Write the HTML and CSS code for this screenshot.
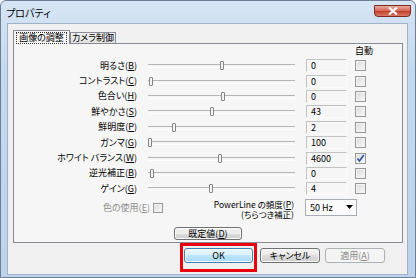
FILE: index.html
```html
<!DOCTYPE html>
<html lang="ja">
<head>
<meta charset="utf-8">
<title>プロパティ</title>
<link rel="stylesheet" href="styles.css">
</head>
<body>
<div class="window">
  <div class="titlebar">
    <span class="title">プロパティ</span>
    <span class="close"><svg width="10" height="8" viewBox="0 0 10 8"><path d="M1 0.5 L9 7.5 M9 0.5 L1 7.5" stroke="#fff" stroke-width="2.2" fill="none"/></svg></span>
  </div>
  <div class="client">
    <div class="tabs">
      <div class="tab active"><span class="focus">画像の調整</span></div>
      <div class="tab">カメラ制御</div>
    </div>
    <div class="panel">
      <div class="head"><span>自動</span></div>
      <div class="row"><span class="lbl">明るさ(<u>B</u>)</span><div class="slider"><span class="thumb" style="left:72px"></span></div><div class="val">0</div><span class="chk"></span></div>
      <div class="row"><span class="lbl">コントラスト(<u>C</u>)</span><div class="slider"><span class="thumb" style="left:1px"></span></div><div class="val">0</div><span class="chk"></span></div>
      <div class="row"><span class="lbl">色合い(<u>H</u>)</span><div class="slider"><span class="thumb" style="left:73px"></span></div><div class="val">0</div><span class="chk"></span></div>
      <div class="row"><span class="lbl">鮮やかさ(<u>S</u>)</span><div class="slider"><span class="thumb" style="left:62px"></span></div><div class="val">43</div><span class="chk"></span></div>
      <div class="row"><span class="lbl">鮮明度(<u>P</u>)</span><div class="slider"><span class="thumb" style="left:24px"></span></div><div class="val">2</div><span class="chk"></span></div>
      <div class="row"><span class="lbl">ガンマ(<u>G</u>)</span><div class="slider"><span class="thumb" style="left:0px"></span></div><div class="val">100</div><span class="chk"></span></div>
      <div class="row"><span class="lbl">ホワイト バランス(<u>W</u>)</span><div class="slider"><span class="thumb" style="left:70px"></span></div><div class="val">4600</div><span class="chk checked"><svg width="9" height="9" viewBox="0 0 9 9"><path d="M1.5 4.5 L3.5 7 L7.8 1" stroke="#2b4f9e" stroke-width="1.6" fill="none"/></svg></span></div>
      <div class="row"><span class="lbl">逆光補正(<u>B</u>)</span><div class="slider"><span class="thumb" style="left:2px"></span></div><div class="val">0</div><span class="chk"></span></div>
      <div class="row"><span class="lbl">ゲイン(<u>G</u>)</span><div class="slider"><span class="thumb" style="left:61px"></span></div><div class="val">4</div><span class="chk"></span></div>
      <div class="extra">
        <div class="use"><span class="dis">色の使用(<u>E</u>)</span><span class="chk small"></span></div>
        <div class="pl"><span class="pl1">PowerLine の頻度(<u>P</u>)</span><span class="pl2">(ちらつき補正)</span></div>
        <div class="select"><span>50 Hz</span><svg width="7" height="4" viewBox="0 0 7 4"><path d="M0 0 H7 L3.5 4 Z" fill="#000"/></svg></div>
      </div>
      <div class="defrow"><button class="btn def">既定値(<u>D</u>)</button></div>
    </div>
    <div class="buttons">
      <span class="hl"><button class="btn ok">OK</button></span>
      <button class="btn cancel">キャンセル</button>
      <button class="btn apply" disabled>適用(<u>A</u>)</button>
    </div>
  </div>
</div>
</body>
</html>
```
FILE: styles.css
```css
* { box-sizing: border-box; margin: 0; padding: 0; }
html, body { width: 416px; height: 278px; overflow: hidden; }
body {
  font-family: "Noto Sans CJK JP", "Noto Sans", sans-serif;
  font-size: 9px;
  color: #000;
  font-feature-settings: "palt";
  background: #fff;
}
u { text-decoration: underline; text-underline-offset: 1px; }

.window {
  width: 416px;
  height: 278px;
  background: linear-gradient(180deg, #d6e5f4 0, #c5d9ee 25%, #bdd3eb 100%);
  border: 1px solid #6c7f95;
  border-radius: 6px 6px 0 0;
  display: flex;
  flex-direction: column;
}

.titlebar {
  height: 22px;
  display: flex;
  align-items: flex-start;
  padding-left: 5px;
}
.title {
  font-size: 10px;
  line-height: 12px;
  margin-top: 6px;
  color: #000;
}
.close {
  margin-left: auto;
  margin-right: 4px;
  margin-top: 4px;
  width: 37px;
  height: 12px;
  border: 1px solid #7c2d25;
  border-radius: 0 0 4px 4px;
  background: linear-gradient(180deg, #e9a99c 0, #d76a5a 45%, #c4402f 55%, #d97a68 100%);
  display: flex;
  align-items: center;
  justify-content: center;
}

.client {
  margin-left: 6px;
  width: 401px;
  height: 252px;
  background: #f0f0f0;
  border: 1px solid #9fb2c8;
  display: flex;
  flex-direction: column;
}

.tabs {
  height: 19px;
  padding-left: 5px;
  display: flex;
  align-items: flex-end;
}
.tab {
  border: 1px solid #898c95;
  border-bottom: none;
  font-size: 9px;
  line-height: 10px;
  white-space: nowrap;
  display: flex;
  align-items: center;
  justify-content: center;
  height: 11px;
  width: 46px;
  background: linear-gradient(180deg, #f3f3f3, #e2e2e2);
}
.tab.active {
  width: 57px;
  height: 14px;
  margin-bottom: -1px;
  position: relative;
  z-index: 1;
  background: #f6f6f6;
}
.focus {
  outline: 1px dotted #333;
  outline-offset: 0;
  padding: 0 2px;
  line-height: 10px;
}

.panel {
  margin: 0 4px 0 5px;
  height: 200px;
  border: 1px solid #898c95;
  background: #f6f6f6;
  display: flex;
  flex-direction: column;
  overflow: hidden;
}
.head {
  height: 14px;
  line-height: 14px;
  padding-left: 341px;
}
.row {
  height: 15.4px;
  display: flex;
  align-items: center;
}
.lbl {
  width: 123px;
  text-align: right;
  white-space: nowrap;
  line-height: 12px;
}
.slider {
  width: 147px;
  height: 9px;
  margin-left: 11px;
  position: relative;
}
.slider::before {
  content: "";
  position: absolute;
  left: 0;
  right: 0;
  top: 3px;
  height: 2px;
  border-top: 1px solid #b4b4b4;
  border-bottom: 1px solid #fdfdfd;
}
.thumb {
  position: absolute;
  top: 0;
  width: 4px;
  height: 9px;
  border: 1px solid #858585;
  border-radius: 1px;
  background: #f4f4f4;
}
.val {
  width: 41px;
  height: 13px;
  margin-left: 11px;
  border: 1px solid;
  border-color: #c2c2c2 #fbfbfb #fbfbfb #c2c2c2;
  padding-left: 4px;
  line-height: 11px;
  font-size: 9px;
}
.chk {
  width: 11px;
  height: 11px;
  margin-left: 8px;
  border: 1px solid #979797;
  background: linear-gradient(135deg, #d9d9d9, #f9f9f9);
  box-shadow: inset 0 0 0 1px #f3f3f3;
  display: flex;
  align-items: center;
  justify-content: center;
}
.chk.small { width: 10px; height: 10px; margin-left: 3px; }

.extra {
  height: 23px;
  display: flex;
  align-items: flex-start;
}
.use {
  width: 149px;
  height: 23px;
  display: flex;
  justify-content: flex-end;
  align-items: center;
}
.dis { color: #8d8d8d; line-height: 12px; }
.pl {
  width: 131px;
  padding-top: 2px;
  display: flex;
  flex-direction: column;
  align-items: flex-end;
  white-space: nowrap;
}
.pl1 { font-size: 8.5px; line-height: 10px; }
.pl2 { font-size: 8.5px; line-height: 10px; }
.select {
  margin-left: 11px;
  margin-top: 2px;
  width: 52px;
  height: 17px;
  border: 1px solid #a9aeb5;
  background: #fbfbfb;
  display: flex;
  align-items: center;
  justify-content: space-between;
  padding: 0 3px 0 4px;
}

.defrow {
  margin-top: 7px;
  display: flex;
  justify-content: center;
}

.btn {
  font-family: inherit;
  font-size: 9px;
  font-feature-settings: "palt";
  color: #000;
  height: 15px;
  border: 1px solid #707070;
  border-radius: 3px;
  background: linear-gradient(180deg, #f2f2f2 0, #ebebeb 50%, #dddddd 50%, #cfcfcf 100%);
  box-shadow: inset 0 0 0 1px #fbfbfb;
  display: flex;
  align-items: center;
  justify-content: center;
  line-height: 11px;
}
.btn.def { width: 68px; height: 13px; }

.buttons {
  display: flex;
  justify-content: flex-end;
  align-items: flex-start;
  padding-right: 22px;
}
.hl {
  border: 3px solid #e8000f;
  padding: 2px 1px 6px 1px;
}
.btn.ok {
  width: 69px;
  border-color: #3c7fb1;
  background: linear-gradient(180deg, #eaf6fd 0, #d9f0fc 50%, #bee6fd 50%, #a7d9f5 100%);
}
.btn.cancel { width: 60px; margin-left: 3px; margin-top: 5px; }
.btn.apply {
  width: 60px;
  margin-left: 5px;
  margin-top: 5px;
  border-color: #adb2b5;
  background: #f4f4f4;
  box-shadow: none;
  color: #8a8a8a;
}
```
